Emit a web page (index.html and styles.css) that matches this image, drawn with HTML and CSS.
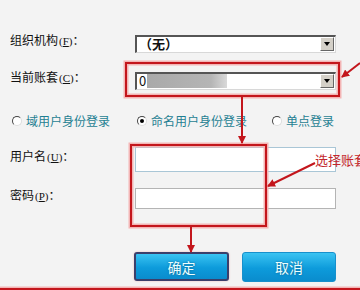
FILE: index.html
```html
<!DOCTYPE html>
<html lang="zh-CN">
  <head>
    <meta charset="UTF-8" />
    <title>登录</title>
    <link rel="stylesheet" href="styles.css">
  </head>
  <body>
    <div class="page">
      <div class="row r1">
        <span class="lbl">组织机构<span class="key">(<u>F</u>)</span>：</span>
        <div class="select"><span class="val">（无）</span><span class="drop"></span></div>
      </div>
      <div class="row r2">
        <span class="lbl">当前账套<span class="key">(<u>C</u>)</span>：</span>
        <div class="select"><span class="val thin">0</span><span class="blur"></span><span class="drop"></span></div>
      </div>
      <div class="radios">
        <label class="radio"><span class="dot"></span>域用户身份登录</label>
        <label class="radio"><span class="dot on"></span>命名用户身份登录</label>
        <label class="radio"><span class="dot"></span>单点登录</label>
      </div>
      <div class="row r3">
        <span class="lbl">用户名<span class="key">(<u>U</u>)</span>：</span>
        <div class="input focus"></div>
      </div>
      <div class="row r4">
        <span class="lbl">密码<span class="key">(<u>P</u>)</span>：</span>
        <div class="input"></div>
      </div>
      <div class="btns">
        <button class="btn ok">确定</button>
        <button class="btn">取消</button>
      </div>

      <!-- annotations drawn on top -->
      <svg class="marks" width="360" height="290" viewBox="0 0 360 290">
        <defs>
          <marker id="head" markerWidth="8" markerHeight="8" refX="7" refY="4" orient="auto" markerUnits="userSpaceOnUse">
            <path d="M0,0 L8,4 L0,8 Z" fill="#c3161c" />
          </marker>
        </defs>
        <g fill="none" stroke="#f3b5b5" stroke-width="5">
          <rect x="126" y="63" width="213" height="33" />
          <rect x="131" y="145" width="135" height="81" />
          <line x1="0" y1="289" x2="360" y2="289" />
        </g>
        <g fill="none" stroke="#c3161c" stroke-width="2">
          <rect x="126" y="63" width="213" height="33" />
          <rect x="131" y="145" width="135" height="81" />
          <line x1="0" y1="289" x2="360" y2="289" />
          <line x1="242" y1="96" x2="242" y2="143" marker-end="url(#head)" />
          <line x1="191" y1="226" x2="191" y2="252" marker-end="url(#head)" />
          <line x1="360" y1="63" x2="342" y2="77" marker-end="url(#head)" />
          <line x1="315" y1="163" x2="268" y2="186" marker-end="url(#head)" />
        </g>
      </svg>
      <span class="note">选择账套</span>
    </div>
  </body>
</html>
```

FILE: styles.css
```css
* {
  box-sizing: border-box;
}
body {
  margin: 0;
  background-color: #f3f3f3;
  font-family: "Noto Sans CJK SC", "Liberation Sans", sans-serif;
  font-size: 12px;
  color: #111;
}
.page {
  position: relative;
  width: 360px;
  height: 290px;
  padding-top: 33px;
  overflow: hidden;
}
.row {
  display: grid;
  grid-template-columns: 135px 201px;
  align-items: center;
}
.lbl {
  padding-left: 10px;
  margin-bottom: 6px;
  line-height: 14px;
  white-space: nowrap;
}
.key {
  font-size: 11px;
  font-family: "Liberation Serif", serif;
  margin-left: 1px;
}
.r1 {
  height: 18px;
}
.r2 {
  margin-top: 19px;
  height: 18px;
}
.r3 {
  margin-top: 19px;
  height: 25px;
}
.r4 {
  margin-top: 16px;
  height: 21px;
}
.select {
  display: flex;
  align-items: center;
  height: 18px;
  background-color: #fff;
  border-top: 2px solid #555;
  border-left: 2px solid #555;
  border-right: 1px solid #d8d8d8;
  border-bottom: 1px solid #d8d8d8;
  padding-left: 2px;
}
.val {
  font-size: 13px;
  font-weight: bold;
  line-height: 14px;
}
.val.thin {
  font-weight: normal;
}
.blur {
  width: 80px;
  height: 14px;
  margin-left: 1px;
  background: linear-gradient(90deg, #a9a9a9, #b5b5b5 80%, #d9d9d9);
}
.drop {
  margin-left: auto;
  margin-right: 1px;
  width: 14px;
  height: 14px;
  background-color: #d4d0c8;
  border: 1px solid;
  border-color: #fff #666 #666 #fff;
  position: relative;
}
.drop::after {
  content: "";
  position: absolute;
  left: 3px;
  top: 4px;
  border-left: 3.5px solid transparent;
  border-right: 3.5px solid transparent;
  border-top: 4px solid #000;
}
.radios {
  display: grid;
  grid-template-columns: 125px 135px auto;
  margin-top: 26px;
  height: 14px;
  padding-left: 12px;
  align-items: center;
}
.radio {
  display: flex;
  align-items: center;
  gap: 4px;
  color: #1f7f92;
  white-space: nowrap;
  line-height: 14px;
}
.dot {
  width: 10px;
  height: 10px;
  border-radius: 50%;
  background-color: #fff;
  border: 1px solid;
  border-color: #444 #ddd #ddd #444;
  display: flex;
  align-items: center;
  justify-content: center;
}
.dot.on::after {
  content: "";
  width: 4px;
  height: 4px;
  border-radius: 50%;
  background-color: #000;
}
.input {
  background-color: #fff;
  border: 1px solid #b4b4b4;
  height: 100%;
}
.input.focus {
  border-color: #a9c6d6;
}
.btns {
  display: flex;
  gap: 13px;
  margin-top: 43px;
  padding-left: 134px;
}
.btn {
  width: 94px;
  height: 30px;
  border: 1px solid #1790cc;
  border-radius: 3px;
  background: linear-gradient(#3ac3f2, #0d9bdb 55%, #0a8ccd);
  color: #eaffff;
  font-family: "Noto Sans CJK SC", sans-serif;
  font-size: 14px;
  text-shadow: 0 0 2px #0a5c8a;
  padding: 0;
}
.btn.ok {
  width: 95px;
  height: 29px;
  border: 2px solid #3b3f6b;
  box-shadow: 0 0 2px #f2b0b0;
}
.marks {
  position: absolute;
  left: 0;
  top: 0;
  pointer-events: none;
}
.note {
  position: absolute;
  left: 315px;
  top: 150px;
  font-size: 13px;
  color: #c3282d;
  white-space: nowrap;
}
```
